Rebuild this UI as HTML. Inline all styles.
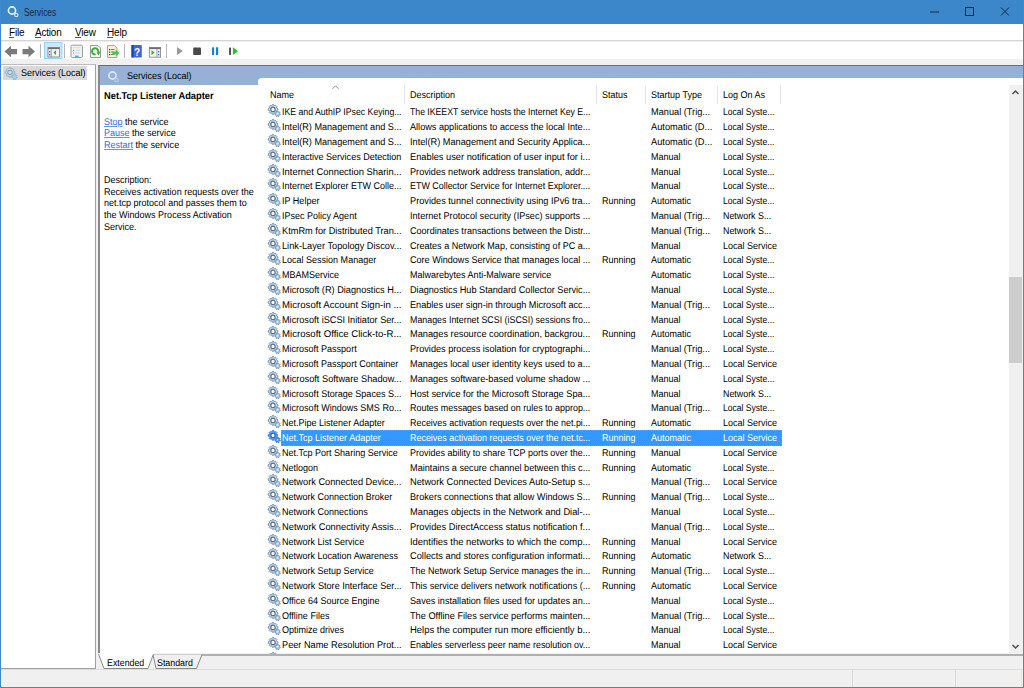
<!DOCTYPE html>
<html><head><meta charset="utf-8"><title>Services</title><style>
*{margin:0;padding:0;box-sizing:border-box}
html,body{width:1024px;height:688px;overflow:hidden}
body{position:relative;background:#f0f0f0;font-family:"Liberation Sans",sans-serif;font-size:9px;color:#000;line-height:12px}
.a{position:absolute;white-space:nowrap}
#title{left:0;top:0;width:1024px;height:24px;background:#3c87c9}
#menu{left:1px;top:24px;width:1022px;height:17px;background:#fff;border-bottom:1px solid #d4d4d4}
#menu span{position:absolute;top:2px;font-size:10px;letter-spacing:-.2px;color:#000;line-height:14px}
#menu i{position:absolute;top:11px;height:1px;background:#555}
#tool{left:1px;top:42px;width:1022px;height:17px;background:#fff}
#lpane{left:1px;top:64px;width:95px;height:605px;background:#fff;border-right:1px solid #a0a0a0;border-top:1px solid #bcbcbc;border-bottom:1px solid #a0a0a0}
#rpane{left:98px;top:65px;width:925px;height:588px;background:#fff;border-left:2px solid #8a8a8a;border-top:1px solid #6d6d6d}
#hdr{left:100px;top:66px;width:923px;height:19px;background:#96b1d5}
#tab{left:258px;top:78px;width:765px;height:10px;background:#fff;border-top-left-radius:4px}
#status{left:1px;top:669px;width:1022px;height:18px;background:#f0f0f0;border-top:1px solid #dcdcdc}
.bl{background:#3d8ad0}
.r{position:absolute;left:258px;width:764px;height:14px}
.r span{position:absolute;top:0;white-space:nowrap;line-height:12px;font-size:9.8px;text-rendering:geometricPrecision;transform:scaleX(.92);transform-origin:0 0}
.gi{position:absolute;left:9px;top:-3.6px;width:14px;height:14px}
.c0{left:24px}.c1{left:152px}.c2{left:344px}.c3{left:393px}.c4{left:465px}
.sel::before{content:"";position:absolute;left:23px;top:-3px;width:499px;height:14px;background:#3399ff;border:1px dotted #c98a4a}
.sel span{color:#fff}
.colh{position:absolute;top:90px;font-size:9.8px;text-rendering:geometricPrecision;transform:scaleX(.92);transform-origin:0 0;line-height:12px;white-space:nowrap}
.sep{position:absolute;top:86px;width:1px;height:18px;background:#e5e5e5}
.tsep{position:absolute;top:44px;width:1px;height:14px;background:#b8b8b8}
.lnk{color:#2a6fd6;text-decoration:underline;text-decoration-color:#5b9be6}
.t{font-size:9.8px;text-rendering:geometricPrecision;transform:scaleX(.92);transform-origin:0 0}
#sb{left:1009px;top:85px;width:14px;height:569px;background:#f0f0f0}
#thumb{left:1009px;top:277px;width:13px;height:86px;background:#cdcdcd}
</style></head>
<body>
<svg width="0" height="0" style="position:absolute"><defs>
<symbol id="g" viewBox="-1 -1 14 14">
<path d="M8.70 3.87 L8.90 4.50 L9.84 4.63 L9.84 6.17 L8.90 6.30 L8.70 6.93 L8.39 7.52 L8.96 8.28 L7.88 9.36 L7.12 8.79 L6.53 9.10 L5.90 9.30 L5.77 10.24 L4.23 10.24 L4.10 9.30 L3.47 9.10 L2.88 8.79 L2.12 9.36 L1.04 8.28 L1.61 7.52 L1.30 6.93 L1.10 6.30 L0.16 6.17 L0.16 4.63 L1.10 4.50 L1.30 3.87 L1.61 3.28 L1.04 2.52 L2.12 1.44 L2.88 2.01 L3.47 1.70 L4.10 1.50 L4.23 0.56 L5.77 0.56 L5.90 1.50 L6.53 1.70 L7.12 2.01 L7.88 1.44 L8.96 2.52 L8.39 3.28 Z" fill="#c4e2f4" stroke="#6a83a2" stroke-width=".8"/>
<circle cx="5" cy="5.4" r="2.2" fill="#fff" stroke="#5a7090" stroke-width="1.2"/>
<path d="M11.68 9.59 L11.70 9.99 L12.38 10.24 L12.08 11.19 L11.38 11.01 L11.14 11.33 L10.84 11.60 L11.07 12.28 L10.14 12.65 L9.84 11.99 L9.44 11.99 L9.05 11.93 L8.65 12.54 L7.79 12.03 L8.12 11.39 L7.86 11.08 L7.67 10.73 L6.95 10.80 L6.80 9.81 L7.51 9.67 L7.59 9.28 L7.75 8.91 L7.24 8.39 L7.92 7.66 L8.48 8.13 L8.83 7.94 L9.22 7.83 L9.31 7.12 L10.31 7.19 L10.29 7.92 L10.65 8.08 L10.98 8.31 L11.60 7.94 L12.16 8.76 L11.58 9.20 Z" fill="#b0d0e4" stroke="#6d86a3" stroke-width=".7"/>
<circle cx="9.5" cy="9.8" r=".8" fill="#e8f2f8"/>
</symbol>
<symbol id="gs" viewBox="-1 -1 14 14">
<path d="M8.70 3.87 L8.90 4.50 L9.84 4.63 L9.84 6.17 L8.90 6.30 L8.70 6.93 L8.39 7.52 L8.96 8.28 L7.88 9.36 L7.12 8.79 L6.53 9.10 L5.90 9.30 L5.77 10.24 L4.23 10.24 L4.10 9.30 L3.47 9.10 L2.88 8.79 L2.12 9.36 L1.04 8.28 L1.61 7.52 L1.30 6.93 L1.10 6.30 L0.16 6.17 L0.16 4.63 L1.10 4.50 L1.30 3.87 L1.61 3.28 L1.04 2.52 L2.12 1.44 L2.88 2.01 L3.47 1.70 L4.10 1.50 L4.23 0.56 L5.77 0.56 L5.90 1.50 L6.53 1.70 L7.12 2.01 L7.88 1.44 L8.96 2.52 L8.39 3.28 Z" fill="#52a2f2" stroke="#2f72c8" stroke-width=".75"/>
<circle cx="5" cy="5.4" r="2.1" fill="#fff" stroke="#2c64b4" stroke-width="1.1"/>
<path d="M11.68 9.59 L11.70 9.99 L12.38 10.24 L12.08 11.19 L11.38 11.01 L11.14 11.33 L10.84 11.60 L11.07 12.28 L10.14 12.65 L9.84 11.99 L9.44 11.99 L9.05 11.93 L8.65 12.54 L7.79 12.03 L8.12 11.39 L7.86 11.08 L7.67 10.73 L6.95 10.80 L6.80 9.81 L7.51 9.67 L7.59 9.28 L7.75 8.91 L7.24 8.39 L7.92 7.66 L8.48 8.13 L8.83 7.94 L9.22 7.83 L9.31 7.12 L10.31 7.19 L10.29 7.92 L10.65 8.08 L10.98 8.31 L11.60 7.94 L12.16 8.76 L11.58 9.20 Z" fill="#4a9aec" stroke="#2f72c8" stroke-width=".7"/>
<circle cx="9.6" cy="9.9" r=".8" fill="#d8ecfc"/>
</symbol>
<symbol id="gt" viewBox="-1 -1 14 14">
<path d="M8.70 3.87 L8.90 4.50 L9.84 4.63 L9.84 6.17 L8.90 6.30 L8.70 6.93 L8.39 7.52 L8.96 8.28 L7.88 9.36 L7.12 8.79 L6.53 9.10 L5.90 9.30 L5.77 10.24 L4.23 10.24 L4.10 9.30 L3.47 9.10 L2.88 8.79 L2.12 9.36 L1.04 8.28 L1.61 7.52 L1.30 6.93 L1.10 6.30 L0.16 6.17 L0.16 4.63 L1.10 4.50 L1.30 3.87 L1.61 3.28 L1.04 2.52 L2.12 1.44 L2.88 2.01 L3.47 1.70 L4.10 1.50 L4.23 0.56 L5.77 0.56 L5.90 1.50 L6.53 1.70 L7.12 2.01 L7.88 1.44 L8.96 2.52 L8.39 3.28 Z" fill="#b4dcf2" stroke="#86a6c2" stroke-width=".7"/>
<circle cx="5" cy="5.4" r="2.3" fill="#d6d2d8" stroke="#7f95ae" stroke-width=".9"/>
<path d="M11.68 9.59 L11.70 9.99 L12.38 10.24 L12.08 11.19 L11.38 11.01 L11.14 11.33 L10.84 11.60 L11.07 12.28 L10.14 12.65 L9.84 11.99 L9.44 11.99 L9.05 11.93 L8.65 12.54 L7.79 12.03 L8.12 11.39 L7.86 11.08 L7.67 10.73 L6.95 10.80 L6.80 9.81 L7.51 9.67 L7.59 9.28 L7.75 8.91 L7.24 8.39 L7.92 7.66 L8.48 8.13 L8.83 7.94 L9.22 7.83 L9.31 7.12 L10.31 7.19 L10.29 7.92 L10.65 8.08 L10.98 8.31 L11.60 7.94 L12.16 8.76 L11.58 9.20 Z" fill="#a8d0e8" stroke="#86a6c2" stroke-width=".6"/>
</symbol></defs></svg>
<div id="title" class="a"></div>

<svg class="a" style="left:0;top:0" width="24" height="24">
<circle cx="12" cy="10.5" r="3.6" fill="none" stroke="#e8f2fa" stroke-width="1.6"/>
<circle cx="16.3" cy="15" r="1.7" fill="none" stroke="#cfe2f2" stroke-width="1.2"/>
</svg>
<div class="a" style="left:23.5px;top:5px;font-size:10.5px;transform:scaleX(.8);transform-origin:0 0;color:#1b2638;line-height:14px">Services</div>
<svg class="a" style="left:920px;top:0" width="104" height="24">
<line x1="10" y1="12" x2="19" y2="12" stroke="#1b2638" stroke-width="1"/>
<rect x="45.5" y="7.5" width="8" height="8" fill="none" stroke="#1b2638" stroke-width="1"/>
<path d="M81 7.5 L89 15.5 M89 7.5 L81 15.5" stroke="#1b2638" stroke-width="1"/>
</svg>

<div id="menu" class="a"><span style="left:8px">File<i style="left:0;width:5px"></i></span><span style="left:34px">Action<i style="left:0;width:6px"></i></span><span style="left:74px">View<i style="left:0;width:6px"></i></span><span style="left:106px">Help<i style="left:0;width:6px"></i></span></div>
<div id="tool" class="a"></div>

<svg class="a" style="left:0;top:42px" width="250" height="17" viewBox="0 42 250 17">
<!-- back -->
<path d="M4.5 51.5 L11 45.8 L11 49 L17 49 L17 54.3 L11 54.3 L11 57.3 Z" fill="#7a7a7a"/>
<!-- forward -->
<path d="M35 51.5 L28.5 45.8 L28.5 49 L22.5 49 L22.5 54.3 L28.5 54.3 L28.5 57.3 Z" fill="#7a7a7a"/>
<!-- pressed button -->
<rect x="44.5" y="42.5" width="17.5" height="16" fill="#cce8ff" stroke="#99d1ff"/>
<rect x="48" y="47.5" width="11.5" height="9.5" fill="#f4f4f4" stroke="#7d7d7d" stroke-width=".8"/>
<rect x="48" y="47.5" width="11.5" height="1.6" fill="#6e6e6e"/>
<line x1="51.2" y1="49" x2="51.2" y2="57" stroke="#8a8a8a" stroke-width=".8"/>
<rect x="49" y="51" width="1.4" height="1.4" fill="#4a7fd0"/><rect x="49" y="54" width="1.4" height="1.4" fill="#4a7fd0"/>
<path d="M53.5 52.6 L56 50.3 L56 54.9 Z" fill="#22b422"/>
<!-- properties -->
<rect x="71" y="45.2" width="11.5" height="12.3" rx="1.2" fill="#f1f3f5" stroke="#9a9a9a" stroke-width="1"/>
<rect x="73" y="47" width="7.5" height="1.2" fill="#dde3e8"/>
<rect x="73" y="49.8" width="1.2" height="1.2" fill="#5cc7d2"/><rect x="75.3" y="49.8" width="5" height="1.2" fill="#e3d3dc"/>
<rect x="73" y="52.3" width="1.2" height="1.2" fill="#5cc7d2"/><rect x="75.3" y="52.3" width="5" height="1.2" fill="#e3d3dc"/>
<rect x="75" y="55.6" width="3.5" height="1.4" fill="#3ab0e4"/>
<!-- refresh doc -->
<path d="M90.5 45.5 H98 L100.5 48 V57.5 H90.5 Z" fill="#f7f7f7" stroke="#9a9a9a" stroke-width="1"/>
<path d="M95.64 54.35 A3.1 3.1 0 1 1 98.09 52.10" fill="none" stroke="#2fb52f" stroke-width="1.9"/>
<path d="M96.4 52.6 L100.6 51.6 L98.6 55.6 Z" fill="#2fb52f"/>
<!-- export doc -->
<path d="M107.5 45.5 H114.5 L117 48 V57.5 H107.5 Z" fill="#f3efd8" stroke="#a8a8a0" stroke-width="1"/>
<rect x="109" y="49" width="1.2" height="1.2" fill="#333"/><rect x="111" y="49" width="3.5" height="1" fill="#777"/>
<rect x="109" y="51.5" width="1.2" height="1.2" fill="#333"/><rect x="111" y="51.5" width="3.5" height="1" fill="#777"/>
<rect x="109" y="54" width="1.2" height="1.2" fill="#333"/><rect x="111" y="54" width="3.5" height="1" fill="#777"/>
<path d="M112.5 51.8 H115.8 V49.8 L119.5 53 L115.8 56.2 V54.2 H112.5 Z" fill="#3ec93e"/>
<!-- help -->
<rect x="131.5" y="45" width="10.3" height="12.5" rx=".8" fill="#3d68d0"/>
<rect x="131.5" y="45" width="2" height="12.5" fill="#1c3fa6"/>
<text x="137" y="55.6" font-family="Liberation Sans" font-weight="bold" font-size="10" fill="#fff" text-anchor="middle">?</text>
<!-- window play -->
<rect x="149.3" y="47.5" width="11.3" height="9.7" fill="#f4f4f4" stroke="#7d7d7d" stroke-width=".8"/>
<rect x="149.3" y="47.5" width="11.3" height="1.6" fill="#6e6e6e"/>
<line x1="157" y1="49" x2="157" y2="57" stroke="#8a8a8a" stroke-width=".8"/>
<rect x="158" y="51" width="1.4" height="1.4" fill="#4a7fd0"/><rect x="158" y="54" width="1.4" height="1.4" fill="#4a7fd0"/>
<path d="M151.5 50.3 L154.5 52.6 L151.5 54.9 Z" fill="#22b422"/>
<!-- play -->
<path d="M177 46.9 L182.8 51.1 L177 55.3 Z" fill="#9a9a9a"/>
<!-- stop -->
<rect x="193.2" y="47.5" width="7.8" height="7.5" rx="1" fill="#4a4a4a"/>
<!-- pause -->
<rect x="212" y="47.2" width="2.1" height="7.8" rx=".5" fill="#1e7fd0"/>
<rect x="215.9" y="47.2" width="2.3" height="7.8" rx=".5" fill="#1e7fd0"/>
<!-- restart -->
<rect x="229.1" y="47.5" width="1.9" height="7.5" rx=".4" fill="#4a4a4a"/>
<path d="M232.9 47.3 L238 51.2 L232.9 55.1 Z" fill="#2fc02f"/>
</svg>
<div class="tsep" style="left:40px"></div>
<div class="tsep" style="left:64px"></div>
<div class="tsep" style="left:124px"></div>
<div class="tsep" style="left:166px"></div>

<div id="lpane" class="a"></div>
<div class="a" style="left:3px;top:66px;width:84px;height:14px;background:#d9d9d9"></div>
<svg class="a" style="left:4px;top:66px" width="14" height="14"><use href="#gt"/></svg>
<div class="a t" style="left:21px;top:68px">Services (Local)</div>
<div id="rpane" class="a"></div>
<div id="hdr" class="a"></div>
<div id="tab" class="a"></div>
<svg class="a" style="left:104px;top:68px" width="18" height="18">
<circle cx="8.5" cy="7.5" r="3.6" fill="none" stroke="#dbe9f6" stroke-width="1.6"/>
<circle cx="12.5" cy="12" r="1.7" fill="none" stroke="#b9cde3" stroke-width="1.2"/>
</svg>
<div class="a t" style="left:127px;top:71px">Services (Local)</div>

<div class="a t" style="left:104px;top:91px;font-weight:bold;font-size:10px;transform:scaleX(.93)">Net.Tcp Listener Adapter</div>
<div class="a t" style="left:104px;top:117px"><span class="lnk">Stop</span> the service</div>
<div class="a t" style="left:104px;top:128px"><span class="lnk">Pause</span> the service</div>
<div class="a t" style="left:104px;top:140px"><span class="lnk">Restart</span> the service</div>
<div class="a t" style="left:104px;top:175px">Description:</div>
<div class="a t" style="left:104px;top:187px">Receives activation requests over the</div>
<div class="a t" style="left:104px;top:198px">net.tcp protocol and passes them to</div>
<div class="a t" style="left:104px;top:210px">the Windows Process Activation</div>
<div class="a t" style="left:104px;top:222px">Service.</div>

<div class="colh" style="left:270px">Name</div>
<svg class="a" style="left:331px;top:84px" width="9" height="6"><path d="M1.5 4.8 L4.5 1.8 L7.5 4.8" fill="none" stroke="#8a8a8a" stroke-width="1"/></svg>
<div class="sep" style="left:404px"></div><div class="colh" style="left:410px">Description</div>
<div class="sep" style="left:596px"></div><div class="colh" style="left:602px">Status</div>
<div class="sep" style="left:645px"></div><div class="colh" style="left:651px">Startup Type</div>
<div class="sep" style="left:717px"></div><div class="colh" style="left:723px">Log On As</div>
<div class="sep" style="left:780px"></div>
<div class="a" style="left:0;top:0;width:1009px;height:654px;overflow:hidden">
<div class="r" style="top:107px"><svg class="gi"><use href="#g"/></svg><span class="c0" style="transform:scaleX(0.8895)">IKE and AuthIP IPsec Keying...</span><span class="c1" style="transform:scaleX(0.8861)">The IKEEXT service hosts the Internet Key E...</span><span class="c3" style="transform:scaleX(0.9395)">Manual (Trig...</span><span class="c4" style="transform:scaleX(0.8740)">Local Syste...</span></div>
<div class="r" style="top:122px"><svg class="gi"><use href="#g"/></svg><span class="c0" style="transform:scaleX(0.9298)">Intel(R) Management and S...</span><span class="c1" style="transform:scaleX(0.9326)">Allows applications to access the local Inte...</span><span class="c3" style="transform:scaleX(0.9460)">Automatic (D...</span><span class="c4" style="transform:scaleX(0.8740)">Local Syste...</span></div>
<div class="r" style="top:137px"><svg class="gi"><use href="#g"/></svg><span class="c0" style="transform:scaleX(0.9298)">Intel(R) Management and S...</span><span class="c1" style="transform:scaleX(0.9406)">Intel(R) Management and Security Applica...</span><span class="c3" style="transform:scaleX(0.9460)">Automatic (D...</span><span class="c4" style="transform:scaleX(0.8740)">Local Syste...</span></div>
<div class="r" style="top:152px"><svg class="gi"><use href="#g"/></svg><span class="c0">Interactive Services Detection</span><span class="c1" style="transform:scaleX(0.9459)">Enables user notification of user input for i...</span><span class="c3">Manual</span><span class="c4" style="transform:scaleX(0.8740)">Local Syste...</span></div>
<div class="r" style="top:167px"><svg class="gi"><use href="#g"/></svg><span class="c0" style="transform:scaleX(0.9582)">Internet Connection Sharin...</span><span class="c1" style="transform:scaleX(0.9326)">Provides network address translation, addr...</span><span class="c3">Manual</span><span class="c4" style="transform:scaleX(0.8740)">Local Syste...</span></div>
<div class="r" style="top:181px"><svg class="gi"><use href="#g"/></svg><span class="c0" style="transform:scaleX(0.9183)">Internet Explorer ETW Colle...</span><span class="c1" style="transform:scaleX(0.9097)">ETW Collector Service for Internet Explorer....</span><span class="c3">Manual</span><span class="c4" style="transform:scaleX(0.8740)">Local Syste...</span></div>
<div class="r" style="top:196px"><svg class="gi"><use href="#g"/></svg><span class="c0">IP Helper</span><span class="c1" style="transform:scaleX(0.9379)">Provides tunnel connectivity using IPv6 tra...</span><span class="c2">Running</span><span class="c3">Automatic</span><span class="c4" style="transform:scaleX(0.8740)">Local Syste...</span></div>
<div class="r" style="top:211px"><svg class="gi"><use href="#g"/></svg><span class="c0">IPsec Policy Agent</span><span class="c1" style="transform:scaleX(0.9328)">Internet Protocol security (IPsec) supports ...</span><span class="c3" style="transform:scaleX(0.9395)">Manual (Trig...</span><span class="c4" style="transform:scaleX(0.9052)">Network S...</span></div>
<div class="r" style="top:226px"><svg class="gi"><use href="#g"/></svg><span class="c0" style="transform:scaleX(0.9420)">KtmRm for Distributed Tran...</span><span class="c1" style="transform:scaleX(0.9248)">Coordinates transactions between the Distr...</span><span class="c3" style="transform:scaleX(0.9395)">Manual (Trig...</span><span class="c4" style="transform:scaleX(0.9052)">Network S...</span></div>
<div class="r" style="top:241px"><svg class="gi"><use href="#g"/></svg><span class="c0" style="transform:scaleX(0.9405)">Link-Layer Topology Discov...</span><span class="c1" style="transform:scaleX(0.9223)">Creates a Network Map, consisting of PC a...</span><span class="c3">Manual</span><span class="c4">Local Service</span></div>
<div class="r" style="top:255px"><svg class="gi"><use href="#g"/></svg><span class="c0">Local Session Manager</span><span class="c1" style="transform:scaleX(0.9249)">Core Windows Service that manages local ...</span><span class="c2">Running</span><span class="c3">Automatic</span><span class="c4" style="transform:scaleX(0.8740)">Local Syste...</span></div>
<div class="r" style="top:270px"><svg class="gi"><use href="#g"/></svg><span class="c0">MBAMService</span><span class="c1">Malwarebytes Anti-Malware service</span><span class="c3">Automatic</span><span class="c4" style="transform:scaleX(0.8740)">Local Syste...</span></div>
<div class="r" style="top:285px"><svg class="gi"><use href="#g"/></svg><span class="c0" style="transform:scaleX(0.9381)">Microsoft (R) Diagnostics H...</span><span class="c1" style="transform:scaleX(0.9327)">Diagnostics Hub Standard Collector Servic...</span><span class="c3">Manual</span><span class="c4" style="transform:scaleX(0.8740)">Local Syste...</span></div>
<div class="r" style="top:300px"><svg class="gi"><use href="#g"/></svg><span class="c0" style="transform:scaleX(0.9840)">Microsoft Account Sign-in ...</span><span class="c1" style="transform:scaleX(0.9327)">Enables user sign-in through Microsoft acc...</span><span class="c3" style="transform:scaleX(0.9395)">Manual (Trig...</span><span class="c4" style="transform:scaleX(0.8740)">Local Syste...</span></div>
<div class="r" style="top:315px"><svg class="gi"><use href="#g"/></svg><span class="c0" style="transform:scaleX(0.9339)">Microsoft iSCSI Initiator Ser...</span><span class="c1" style="transform:scaleX(0.9047)">Manages Internet SCSI (iSCSI) sessions fro...</span><span class="c3">Manual</span><span class="c4" style="transform:scaleX(0.8740)">Local Syste...</span></div>
<div class="r" style="top:329px"><svg class="gi"><use href="#g"/></svg><span class="c0" style="transform:scaleX(0.9814)">Microsoft Office Click-to-R...</span><span class="c1" style="transform:scaleX(0.9432)">Manages resource coordination, backgrou...</span><span class="c2">Running</span><span class="c3">Automatic</span><span class="c4" style="transform:scaleX(0.8740)">Local Syste...</span></div>
<div class="r" style="top:344px"><svg class="gi"><use href="#g"/></svg><span class="c0">Microsoft Passport</span><span class="c1" style="transform:scaleX(0.9353)">Provides process isolation for cryptographi...</span><span class="c3" style="transform:scaleX(0.9395)">Manual (Trig...</span><span class="c4" style="transform:scaleX(0.8740)">Local Syste...</span></div>
<div class="r" style="top:359px"><svg class="gi"><use href="#g"/></svg><span class="c0">Microsoft Passport Container</span><span class="c1" style="transform:scaleX(0.9353)">Manages local user identity keys used to a...</span><span class="c3" style="transform:scaleX(0.9395)">Manual (Trig...</span><span class="c4">Local Service</span></div>
<div class="r" style="top:374px"><svg class="gi"><use href="#g"/></svg><span class="c0" style="transform:scaleX(0.9419)">Microsoft Software Shadow...</span><span class="c1" style="transform:scaleX(0.9406)">Manages software-based volume shadow ...</span><span class="c3">Manual</span><span class="c4" style="transform:scaleX(0.8740)">Local Syste...</span></div>
<div class="r" style="top:389px"><svg class="gi"><use href="#g"/></svg><span class="c0" style="transform:scaleX(0.9221)">Microsoft Storage Spaces S...</span><span class="c1" style="transform:scaleX(0.9380)">Host service for the Microsoft Storage Spa...</span><span class="c3">Manual</span><span class="c4" style="transform:scaleX(0.9052)">Network S...</span></div>
<div class="r" style="top:403px"><svg class="gi"><use href="#g"/></svg><span class="c0" style="transform:scaleX(0.9222)">Microsoft Windows SMS Ro...</span><span class="c1" style="transform:scaleX(0.9120)">Routes messages based on rules to approp...</span><span class="c3" style="transform:scaleX(0.9395)">Manual (Trig...</span><span class="c4" style="transform:scaleX(0.8740)">Local Syste...</span></div>
<div class="r" style="top:418px"><svg class="gi"><use href="#g"/></svg><span class="c0">Net.Pipe Listener Adapter</span><span class="c1" style="transform:scaleX(0.9120)">Receives activation requests over the net.pi...</span><span class="c2">Running</span><span class="c3">Automatic</span><span class="c4">Local Service</span></div>
<div class="r sel" style="top:433px"><svg class="gi"><use href="#gs"/></svg><span class="c0">Net.Tcp Listener Adapter</span><span class="c1" style="transform:scaleX(0.9121)">Receives activation requests over the net.tc...</span><span class="c2">Running</span><span class="c3">Automatic</span><span class="c4">Local Service</span></div>
<div class="r" style="top:448px"><svg class="gi"><use href="#g"/></svg><span class="c0">Net.Tcp Port Sharing Service</span><span class="c1" style="transform:scaleX(0.9163)">Provides ability to share TCP ports over the...</span><span class="c2">Running</span><span class="c3">Manual</span><span class="c4">Local Service</span></div>
<div class="r" style="top:463px"><svg class="gi"><use href="#g"/></svg><span class="c0">Netlogon</span><span class="c1" style="transform:scaleX(0.9353)">Maintains a secure channel between this c...</span><span class="c2">Running</span><span class="c3">Automatic</span><span class="c4" style="transform:scaleX(0.8740)">Local Syste...</span></div>
<div class="r" style="top:477px"><svg class="gi"><use href="#g"/></svg><span class="c0" style="transform:scaleX(0.9419)">Network Connected Device...</span><span class="c1" style="transform:scaleX(0.9460)">Network Connected Devices Auto-Setup s...</span><span class="c3" style="transform:scaleX(0.9395)">Manual (Trig...</span><span class="c4">Local Service</span></div>
<div class="r" style="top:492px"><svg class="gi"><use href="#g"/></svg><span class="c0">Network Connection Broker</span><span class="c1" style="transform:scaleX(0.9353)">Brokers connections that allow Windows S...</span><span class="c2">Running</span><span class="c3" style="transform:scaleX(0.9395)">Manual (Trig...</span><span class="c4" style="transform:scaleX(0.8740)">Local Syste...</span></div>
<div class="r" style="top:507px"><svg class="gi"><use href="#g"/></svg><span class="c0">Network Connections</span><span class="c1" style="transform:scaleX(0.9515)">Manages objects in the Network and Dial-...</span><span class="c3">Manual</span><span class="c4" style="transform:scaleX(0.8740)">Local Syste...</span></div>
<div class="r" style="top:522px"><svg class="gi"><use href="#g"/></svg><span class="c0" style="transform:scaleX(0.9501)">Network Connectivity Assis...</span><span class="c1" style="transform:scaleX(0.9488)">Provides DirectAccess status notification f...</span><span class="c3" style="transform:scaleX(0.9395)">Manual (Trig...</span><span class="c4" style="transform:scaleX(0.8740)">Local Syste...</span></div>
<div class="r" style="top:537px"><svg class="gi"><use href="#g"/></svg><span class="c0">Network List Service</span><span class="c1" style="transform:scaleX(0.9625)">Identifies the networks to which the comp...</span><span class="c2">Running</span><span class="c3">Manual</span><span class="c4">Local Service</span></div>
<div class="r" style="top:551px"><svg class="gi"><use href="#g"/></svg><span class="c0">Network Location Awareness</span><span class="c1" style="transform:scaleX(0.9460)">Collects and stores configuration informati...</span><span class="c2">Running</span><span class="c3">Automatic</span><span class="c4" style="transform:scaleX(0.9052)">Network S...</span></div>
<div class="r" style="top:566px"><svg class="gi"><use href="#g"/></svg><span class="c0">Network Setup Service</span><span class="c1" style="transform:scaleX(0.9146)">The Network Setup Service manages the in...</span><span class="c2">Running</span><span class="c3" style="transform:scaleX(0.9395)">Manual (Trig...</span><span class="c4" style="transform:scaleX(0.8740)">Local Syste...</span></div>
<div class="r" style="top:581px"><svg class="gi"><use href="#g"/></svg><span class="c0" style="transform:scaleX(0.9298)">Network Store Interface Ser...</span><span class="c1" style="transform:scaleX(0.9276)">This service delivers network notifications (...</span><span class="c2">Running</span><span class="c3">Automatic</span><span class="c4">Local Service</span></div>
<div class="r" style="top:596px"><svg class="gi"><use href="#g"/></svg><span class="c0">Office 64 Source Engine</span><span class="c1" style="transform:scaleX(0.9299)">Saves installation files used for updates an...</span><span class="c3">Manual</span><span class="c4" style="transform:scaleX(0.8740)">Local Syste...</span></div>
<div class="r" style="top:611px"><svg class="gi"><use href="#g"/></svg><span class="c0">Offline Files</span><span class="c1" style="transform:scaleX(0.9390)">The Offline Files service performs mainten...</span><span class="c3" style="transform:scaleX(0.9395)">Manual (Trig...</span><span class="c4" style="transform:scaleX(0.8740)">Local Syste...</span></div>
<div class="r" style="top:625px"><svg class="gi"><use href="#g"/></svg><span class="c0">Optimize drives</span><span class="c1" style="transform:scaleX(0.9663)">Helps the computer run more efficiently b...</span><span class="c3">Manual</span><span class="c4" style="transform:scaleX(0.8740)">Local Syste...</span></div>
<div class="r" style="top:640px"><svg class="gi"><use href="#g"/></svg><span class="c0" style="transform:scaleX(0.9378)">Peer Name Resolution Prot...</span><span class="c1" style="transform:scaleX(0.9104)">Enables serverless peer name resolution ov...</span><span class="c3">Manual</span><span class="c4">Local Service</span></div>
<div class="r" style="top:655px"><svg class="gi"><use href="#g"/></svg></div>
</div>

<div id="sb" class="a"></div>
<div id="thumb" class="a"></div>
<svg class="a" style="left:1009px;top:85px" width="14" height="569">
<path d="M3.5 9 L6.5 6 L9.5 9" fill="none" stroke="#505050" stroke-width="1.5"/>
<path d="M3.5 560 L6.5 563 L9.5 560" fill="none" stroke="#505050" stroke-width="1.5"/>
</svg>

<div id="status" class="a"></div>
<div class="a" style="left:852px;top:670px;width:1px;height:17px;background:#d9d9d9"></div>
<div class="a" style="left:955px;top:670px;width:1px;height:17px;background:#d9d9d9"></div>
<div class="a" style="left:1021px;top:670px;width:1px;height:17px;background:#e2e2e2"></div>
<div class="a" style="left:153px;top:654px;width:870px;height:2px;background:#b0b0b0"></div>

<svg class="a" style="left:95px;top:653px" width="120" height="17">
<path d="M58 1.5 L61 15.5 L101.5 15.5 L107 1.5" fill="#f0f0f0" stroke="#8a8a8a" stroke-width="1"/>
<path d="M3 0 L3 1 L9 15.5 L53 15.5 L58.5 1 L58.5 0 Z" fill="#fff"/>
<path d="M3.5 1 L9 15.5 L53 15.5 L58.5 1" fill="none" stroke="#8a8a8a" stroke-width="1"/>
</svg>
<div class="a t" style="left:107px;top:658px;transform:scaleX(.9)">Extended</div>
<div class="a t" style="left:157px;top:658px;transform:scaleX(.9)">Standard</div>

<div class="a bl" style="left:0;top:0;width:1px;height:688px"></div>
<div class="a bl" style="left:1023px;top:0;width:1px;height:688px"></div>
<div class="a bl" style="left:0;top:687px;width:1024px;height:1px"></div>
</body></html>
